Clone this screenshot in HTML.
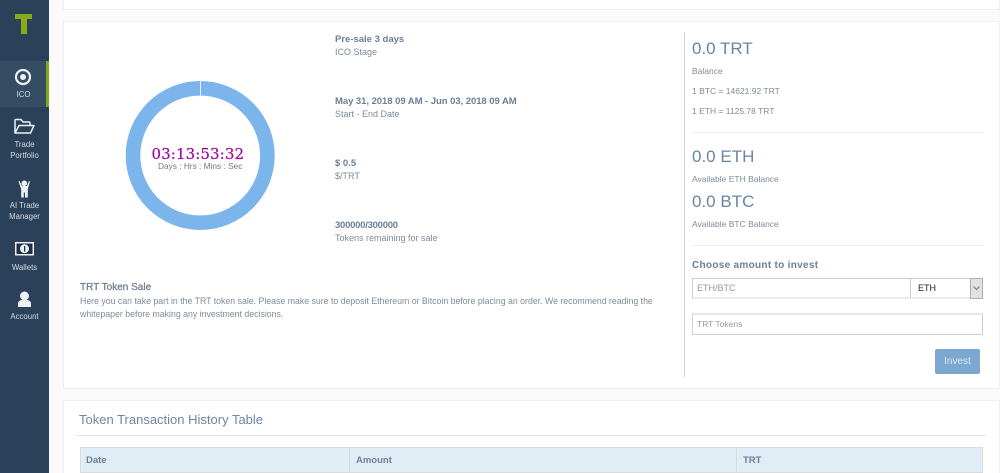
<!DOCTYPE html>
<html><head><meta charset="utf-8"><style>
html,body{margin:0;padding:0;width:1000px;height:473px;overflow:hidden;background:#fafafa;font-family:"Liberation Sans",Arial,sans-serif;}
#w{position:relative;width:1000px;height:473px;overflow:hidden;}
.a{position:absolute;white-space:nowrap;}
.card{position:absolute;background:#fff;border:1px solid #efefef;box-sizing:border-box;}
.b{font-size:9.5px;font-weight:bold;color:#6b7f98;line-height:12px;}
.s{font-size:9px;color:#7f8b9c;line-height:12px;}
.h{font-size:17px;color:#6b84a3;line-height:20px;}
.nav{position:absolute;left:0;width:49px;text-align:center;color:#d5dce4;font-size:7.8px;line-height:11px;white-space:nowrap;}
svg{position:absolute;}
</style></head><body><div id="w">
<div class="a" style="left:0;top:0;width:49px;height:473px;background:#2b4159;"></div>
<div class="a" style="left:0;top:61px;width:49px;height:46px;background:#364c63;"></div>
<div class="a" style="left:46px;top:61px;width:3px;height:46px;background:#7fa81c;"></div>
<div class="a" style="left:15px;top:14px;width:17px;height:5px;background:#86ad18;"></div>
<div class="a" style="left:21px;top:14px;width:5.500px;height:20px;background:#86ad18;"></div>
<svg style="left:14px;top:68px" width="20" height="18" viewBox="0 0 20 18"><circle cx="9" cy="9" r="7" fill="none" stroke="#eef1f4" stroke-width="2.2"/><circle cx="9" cy="9" r="3" fill="#eef1f4"/></svg>
<div class="nav" style="top:89px;left:-1px">ICO</div>
<svg style="left:14px;top:118px" width="22" height="17" viewBox="0 0 22 17"><path d="M1 15V2.500Q1 1.500 2 1.500H7L9 4H15Q16 4 16 5V7M1 15L5 7.500H20L16.500 15Z" fill="none" stroke="#eef1f4" stroke-width="1.500" stroke-linejoin="round"/></svg>
<div class="nav" style="top:139px;left:0">Trade<br>Portfolio</div>
<svg style="left:18px;top:180px" width="13" height="18" viewBox="0 0 13 18"><circle cx="6.300" cy="3.300" r="2.800" fill="#eef1f4"/><path d="M0.500 1.500L1.500 1L4 6H9L11 1L12 1.500L9.800 9V17.500H7V12.500H5.800V17.500H3.200V9Z" fill="#eef1f4"/></svg>
<div class="nav" style="top:200px;left:0">AI Trade<br>Manager</div>
<svg style="left:14px;top:241px" width="21" height="15" viewBox="0 0 21 15"><rect x="1" y="1" width="19" height="13.500" fill="#eef1f4"/><rect x="2.500" y="2.500" width="16" height="10.500" fill="#1f3044"/><circle cx="10.500" cy="7.700" r="4.500" fill="#eef1f4"/><rect x="10" y="5" width="1.300" height="5.500" fill="#1f3044"/></svg>
<div class="nav" style="top:262px;left:0">Wallets</div>
<svg style="left:17px;top:291px" width="15" height="18" viewBox="0 0 15 18"><circle cx="7.500" cy="5" r="4.500" fill="#eef1f4"/><path d="M1 16V13Q1 9.500 4.500 9H10.500Q14 9.500 14 13V16Z" fill="#eef1f4"/></svg>
<div class="nav" style="top:311px;left:0">Account</div>

<div class="card" style="left:63px;top:-10px;width:937px;height:20px;"></div>
<div class="card" style="left:63px;top:21px;width:937px;height:368px;"></div>
<div class="card" style="left:63px;top:400px;width:937px;height:73px;border-bottom:none;"></div>

<svg style="left:110px;top:70px" width="180" height="170" viewBox="0 0 180 170"><circle cx="90.200" cy="85.500" r="67.200" fill="none" stroke="#7cb4ec" stroke-width="14.600"/><rect x="90" y="11" width="1" height="15" fill="#e8f1fb"/></svg>
<div class="a" style="left:151.500px;top:145px;font-family:'DejaVu Serif','Liberation Serif',serif;font-size:15px;line-height:18px;color:#a5089e;letter-spacing:.1px;-webkit-text-stroke:.25px #a5089e;">03:13:53:32</div>
<div class="a" style="left:158px;top:160px;font-size:8.300px;line-height:12px;color:#777;">Days : Hrs : Mins : Sec</div>

<div class="a" style="left:80px;top:282px;font-size:10px;color:#6e7b8c;line-height:12px;-webkit-text-stroke:.25px #6e7b8c;">TRT Token Sale</div>
<div class="a s" style="left:80px;top:295px;line-height:13px;font-size:8.750px;">Here you can take part in the TRT token sale. Please make sure to deposit Ethereum or Bitcoin before placing an order. We recommend reading the<br>whitepaper before making any investment decisions.</div>

<div class="a b" style="left:335px;top:33.500px;">Pre-sale 3 days</div>
<div class="a s" style="left:335px;top:46px;">ICO Stage</div>
<div class="a b" style="left:335px;top:95.500px;letter-spacing:-.05px;">May 31, 2018 09 AM - Jun 03, 2018 09 AM</div>
<div class="a s" style="left:335px;top:108px;">Start - End Date</div>
<div class="a b" style="left:335px;top:157.500px;">$ 0.5</div>
<div class="a s" style="left:335px;top:170px;">$/TRT</div>
<div class="a b" style="left:335px;top:219.500px;letter-spacing:-.25px;">300000/300000</div>
<div class="a s" style="left:335px;top:232px;">Tokens remaining for sale</div>

<div class="a" style="left:684px;top:32px;width:1px;height:345px;background:#d4d4d4;"></div>
<div class="a h" style="left:692px;top:39px;">0.0 TRT</div>
<div class="a s" style="left:692px;top:65px;font-size:8.500px;">Balance</div>
<div class="a s" style="left:692px;top:85px;font-size:8.500px;">1 BTC = 14621.92 TRT</div>
<div class="a s" style="left:692px;top:105px;font-size:8.500px;">1 ETH = 1125.78 TRT</div>
<div class="a" style="left:692px;top:132px;width:291px;height:1px;background:#ececec;"></div>
<div class="a h" style="left:692px;top:146.500px;">0.0 ETH</div>
<div class="a s" style="left:692px;top:173px;font-size:8.500px;">Available ETH Balance</div>
<div class="a h" style="left:692px;top:191.500px;">0.0 BTC</div>
<div class="a s" style="left:692px;top:218px;font-size:8.500px;">Available BTC Balance</div>
<div class="a" style="left:692px;top:245px;width:291px;height:1px;background:#ececec;"></div>
<div class="a" style="left:692px;top:260px;font-size:10px;font-weight:bold;color:#6b7f98;line-height:12px;letter-spacing:.3px;">Choose amount to invest</div>

<div class="a" style="left:692px;top:278px;width:291px;height:21px;box-sizing:border-box;border:1px solid #cfcfcf;border-bottom:2px solid #ececec;background:#fff;"></div>
<div class="a" style="left:910px;top:278px;width:1px;height:20px;background:#cfcfcf;"></div>
<div class="a" style="left:697px;top:282px;font-size:9px;line-height:12px;color:#999;">ETH/BTC</div>
<div class="a" style="left:918px;top:282px;font-size:9px;line-height:12px;color:#222;">ETH</div>
<div class="a" style="left:970px;top:278px;width:13px;height:21px;box-sizing:border-box;border:1px solid #b0b0b0;background:#e2e2e2;"></div>
<svg style="left:972px;top:285px" width="9" height="7" viewBox="0 0 9 7"><path d="M1.500 1.500L4.500 4.500L7.500 1.500" fill="none" stroke="#777" stroke-width="1"/></svg>

<div class="a" style="left:692px;top:313px;width:291px;height:22px;box-sizing:border-box;border:1px solid #cfcfcf;border-top:2px solid #e6e6e6;background:#fff;"></div>
<div class="a" style="left:697px;top:318px;font-size:8.500px;line-height:12px;color:#999;">TRT Tokens</div>
<div class="a" style="left:935px;top:349px;width:45px;height:25px;background:#7ba7d0;border-radius:2px;color:#dce8f3;font-size:10px;line-height:26px;text-align:center;">Invest</div>

<div class="a" style="left:79px;top:412px;font-size:13px;line-height:16px;color:#6d86a5;">Token Transaction History Table</div>
<div class="a" style="left:76px;top:435px;width:911px;height:1px;background:#e6e6e6;"></div>
<div class="a" style="left:80px;top:447px;width:903px;height:26px;box-sizing:border-box;background:#e1edf5;border:1px solid #dadada;"></div>
<div class="a" style="left:349px;top:447px;width:1px;height:26px;background:#dadada;"></div>
<div class="a" style="left:736px;top:447px;width:1px;height:26px;background:#dadada;"></div>
<div class="a b" style="left:86px;top:455px;">Date</div>
<div class="a b" style="left:356px;top:455px;">Amount</div>
<div class="a b" style="left:743px;top:455px;">TRT</div>
</div></body></html>
